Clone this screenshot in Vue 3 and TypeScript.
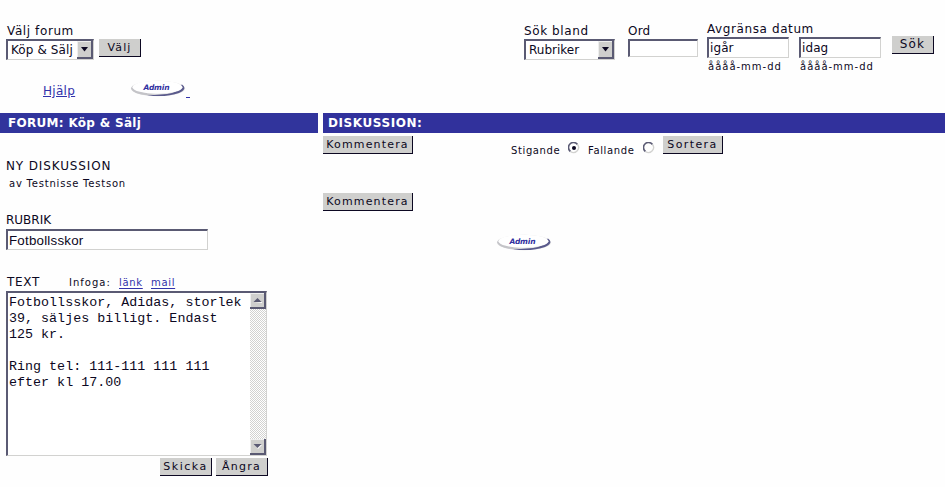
<script setup lang="ts">
import { ref } from 'vue'

const forum = ref('Köp & Sälj')
const scope = ref('Rubriker')
const word = ref('')
const fromDate = ref('igår')
const toDate = ref('idag')
const order = ref('asc')
const title = ref('Fotbollsskor')
const body = ref(
  'Fotbollsskor, Adidas, storlek\n39, säljes billigt. Endast\n125 kr.\n\nRing tel: 111-111 111 111\nefter kl 17.00'
)
</script>

<template>
  <div class="page">
    <header class="top">
      <div class="field forum">
        <label class="wide">Välj forum</label>
        <div class="row">
          <div class="select">
            <select v-model="forum" class="box"><option>Köp &amp; Sälj</option></select>
            <span class="drop"><svg width="9" height="5" viewBox="0 0 9 5"><path d="M1 0H8L4.5 4.5Z" fill="#0c0822" /></svg></span>
          </div>
          <button class="btn choose">Välj</button>
        </div>
      </div>
      <div class="field scope">
        <label class="wide">Sök bland</label>
        <div class="select">
          <select v-model="scope" class="box"><option>Rubriker</option></select>
          <span class="drop"><svg width="9" height="5" viewBox="0 0 9 5"><path d="M1 0H8L4.5 4.5Z" fill="#0c0822" /></svg></span>
        </div>
      </div>
      <div class="field word">
        <label>Ord</label>
        <input v-model="word" class="box" />
      </div>
      <div class="field dates">
        <label class="wide">Avgränsa datum</label>
        <div class="row">
          <div class="date"><input v-model="fromDate" class="box" /><small>åååå-mm-dd</small></div>
          <div class="date"><input v-model="toDate" class="box" /><small>åååå-mm-dd</small></div>
        </div>
      </div>
      <button class="btn search">Sök</button>
    </header>

    <nav class="links">
      <a class="help">Hjälp</a>
      <svg class="admin" width="58" height="18" viewBox="0 0 58 18">
        <ellipse cx="29" cy="8.5" rx="27" ry="7.7" fill="#dededf" />
        <path d="M2 8Q3 14 20 15.5L26 14Q10 13 4 6Z" fill="#c4c4c8" />
        <path d="M18 15.5Q38 17.5 50 13Q59 9 53 4.5L49 7Q51 12 38 14Z" fill="#5a5a8c" />
        <ellipse cx="28.5" cy="7.2" rx="25" ry="6.5" fill="#fff" />
        <text x="14.5" y="10.2" textLength="26" class="admin-text">Admin</text>
      </svg>
      <span class="tail"></span>
    </nav>

    <main class="columns">
      <section class="left">
        <h2 class="bar">FORUM: Köp &amp; Sälj</h2>
        <form class="form" @submit.prevent>
          <p class="heading">NY DISKUSSION</p>
          <p class="author">av Testnisse Testson</p>
          <label class="rubrik">RUBRIK</label>
          <input v-model="title" class="box title" />
          <div class="text-head">
            <label>TEXT</label>
            <span class="insert">Infoga:</span>
            <a class="small-link">länk</a>
            <a class="small-link">mail</a>
          </div>
          <div class="editor">
            <textarea v-model="body" spellcheck="false"></textarea>
            <div class="scroll">
              <span class="arrow"><svg width="9" height="6" viewBox="0 0 9 6"><path d="M1.5 6H9V5Z" fill="#fff" /><path d="M0.5 5H8.5L4.5 1Z" fill="#5a5a73" /></svg></span>
              <span class="arrow"><svg width="9" height="6" viewBox="0 0 9 6"><path d="M2 2H9L5 6Z" fill="#fff" /><path d="M0.5 1H8.5L4.5 5Z" fill="#5a5a73" /></svg></span>
            </div>
          </div>
          <div class="actions">
            <button class="btn send">Skicka</button>
            <button class="btn undo">Ångra</button>
          </div>
        </form>
      </section>

      <section class="right">
        <h2 class="bar">DISKUSSION:</h2>
        <div class="sorting">
          <button class="btn comment">Kommentera</button>
          <span class="sort-label asc">Stigande</span>
          <svg class="radio" width="12" height="12" viewBox="0 0 12 12" @click="order = 'asc'">
            <path d="M2.5 9.5A5 5 0 1 1 9.5 2.5" fill="none" stroke="#5a5a73" stroke-width="1.6" />
            <path d="M9.5 2.5A5 5 0 0 1 2.5 9.5" fill="none" stroke="#d2d2d0" stroke-width="1.3" />
            <circle v-if="order === 'asc'" cx="6" cy="6" r="2" fill="#0c0822" />
          </svg>
          <span class="sort-label">Fallande</span>
          <svg class="radio second" width="12" height="12" viewBox="0 0 12 12" @click="order = 'desc'">
            <path d="M2.5 9.5A5 5 0 1 1 9.5 2.5" fill="none" stroke="#5a5a73" stroke-width="1.6" />
            <path d="M9.5 2.5A5 5 0 0 1 2.5 9.5" fill="none" stroke="#d2d2d0" stroke-width="1.3" />
            <circle v-if="order === 'desc'" cx="6" cy="6" r="2" fill="#0c0822" />
          </svg>
          <button class="btn sort">Sortera</button>
        </div>
        <button class="btn comment">Kommentera</button>
        <svg class="admin lower" width="58" height="18" viewBox="0 0 58 18">
          <ellipse cx="29" cy="8.5" rx="27" ry="7.7" fill="#dededf" />
          <path d="M2 8Q3 14 20 15.5L26 14Q10 13 4 6Z" fill="#c4c4c8" />
          <path d="M18 15.5Q38 17.5 50 13Q59 9 53 4.5L49 7Q51 12 38 14Z" fill="#5a5a8c" />
          <ellipse cx="28.5" cy="7.2" rx="25" ry="6.5" fill="#fff" />
          <text x="14.5" y="10.2" textLength="26" class="admin-text">Admin</text>
        </svg>
      </section>
    </main>
  </div>
</template>

<style>
body { background: #fefefe; }
</style>

<style scoped>
* { box-sizing: border-box; }
.page {
  width: 945px;
  height: 487px;
  overflow: hidden;
  color: #0c0822;
  font: 12px/14px Verdana, "DejaVu Sans", sans-serif;
}
.top { display: flex; height: 75px; padding-left: 6px; align-items: flex-start; }
.field { display: flex; flex-direction: column; padding-top: 24px; }
.field label { height: 15px; padding-left: 1px; letter-spacing: .2px; white-space: nowrap; }
.field label.wide { letter-spacing: .6px; }
.field.scope label, .field.word label, .field.dates label { padding-left: 0; }
.row { display: flex; align-items: flex-start; }
.box {
  display: block;
  margin: 0;
  height: 21px;
  padding: 0 0 0 1px;
  border: solid;
  border-width: 2px 1px 1px 2px;
  border-color: #5a5a73 #d2d2d0 #d2d2d0 #5a5a73;
  border-radius: 0;
  outline: 0;
  background: #fff;
  color: inherit;
  font: inherit;
}
.select { position: relative; width: 88px; }
.select .box { width: 100%; appearance: none; padding-left: 3px; letter-spacing: .1px; }
.drop {
  position: absolute;
  top: 2px;
  right: 1px;
  width: 16px;
  height: 18px;
  display: grid;
  place-items: center;
  background: #cfcfcd;
  border: solid #5a5a73;
  border-width: 0 2px 2px 0;
  box-shadow: inset 1px 1px #eee;
  pointer-events: none;
}
.btn {
  display: block;
  flex: none;
  height: 18px;
  margin: 0;
  padding: 0;
  border: solid #0c0822;
  border-width: 0 1px 1px 0;
  border-radius: 0;
  background: #cfcfcd;
  color: inherit;
  font: 11px/17px Verdana, "DejaVu Sans", sans-serif;
  letter-spacing: 1.15px;
  white-space: nowrap;
}
.choose { width: 42px; margin-left: 5px; }
.forum { width: 518px; }
.scope { width: 104px; }
.scope .select { width: 91px; }
.scope .box { letter-spacing: 0; }
.word { width: 79px; }
.word .box { width: 70px; height: 18px; }
.dates { padding-top: 22px; width: 185px; }
.dates .row { gap: 10px; }
.date { width: 82px; }
.date .box { width: 82px; letter-spacing: .1px; }
.date small { display: block; padding-left: 1px; font-size: 10px; line-height: 12px; padding-top: 3px; letter-spacing: 1px; }
.search { width: 42px; margin-top: 36px; font-size: 12px; }
.links { display: flex; height: 38px; padding-left: 43px; align-items: flex-start; }
.help { margin-top: 9px; color: #3132ab; letter-spacing: .3px; text-decoration: underline; width: 32px; }
.admin { display: block; margin: 5px 0 0 54px; }
.admin-text { font: italic bold 7.5px "DejaVu Sans", sans-serif; fill: #3030a0; }
.tail { width: 4px; height: 1px; margin: 22px 0 0 -1px; background: #3132ab; }
.columns { display: flex; gap: 5px; }
.left { width: 318px; }
.right { width: 622px; }
.bar {
  height: 20px;
  margin: 0;
  padding-left: 8px;
  background: #31349c;
  color: #fff;
  font: bold 12px/21px Verdana, "DejaVu Sans", sans-serif;
  letter-spacing: .3px;
}
.right .bar { padding-left: 5px; background: #31319c; letter-spacing: .57px; }
.form { padding: 26px 0 0 6px; }
.form p { margin: 0; }
.heading { letter-spacing: .87px; }
.author { padding: 5px 0 0 3px; font-size: 10px; line-height: 12px; letter-spacing: .79px; }
.rubrik { display: block; margin-top: 23px; height: 16px; }
.title { width: 202px; font: 13.33px "Liberation Sans", sans-serif; letter-spacing: .22px; }
.text-head { display: flex; height: 16px; margin-top: 25px; align-items: flex-start; font-size: 10px; }
.text-head label { width: 63px; padding-left: 1px; font-size: 12px; letter-spacing: .7px; }
.insert { width: 50px; padding-top: 1px; letter-spacing: 1px; }
.small-link { width: 32px; padding-top: 1px; color: #3132ab; letter-spacing: .68px; text-decoration: underline; text-underline-offset: 2px; }
.editor {
  display: flex;
  width: 261px;
  height: 165px;
  border: solid;
  border-width: 2px 1px 1px 2px;
  border-color: #5a5a73 #d2d2d0 #d2d2d0 #5a5a73;
  background: #fff;
}
.editor textarea {
  flex: 1;
  margin: 0;
  padding: 2px 0 0 1px;
  border: 0;
  outline: 0;
  resize: none;
  overflow: hidden;
  background: transparent;
  color: inherit;
  font: 13.33px/16px "Liberation Mono", monospace;
  letter-spacing: .02px;
  white-space: pre;
}
.scroll {
  width: 16px;
  display: flex;
  flex-direction: column;
  justify-content: space-between;
  background: repeating-conic-gradient(#d2d2d0 0 25%, #fff 0 50%) 0 0 / 2px 2px;
}
.arrow {
  height: 16px;
  display: grid;
  place-items: center;
  background: #cfcfcd;
  border: solid #5a5a73;
  border-width: 0 2px 2px 0;
  box-shadow: inset 1px 1px #eee;
}
.actions { display: flex; gap: 4px; margin-top: 2px; padding-left: 154px; }
.send, .undo { width: 52px; letter-spacing: 1.5px; }
.undo { letter-spacing: 1.3px; }
.sorting { display: flex; align-items: flex-start; height: 60px; padding-top: 3px; }
.comment { width: 90px; }
.sort-label { margin-top: 8px; font-size: 10px; letter-spacing: .62px; width: 47px; }
.sort-label.asc { margin-left: 98px; }
.radio { margin: 6px 8px 0 10px; }
.radio.second { margin: 6px 8px 0 8px; }
.sort { width: 60px; letter-spacing: 1.4px; }
.lower { margin: 23px 0 0 172px; }
</style>
